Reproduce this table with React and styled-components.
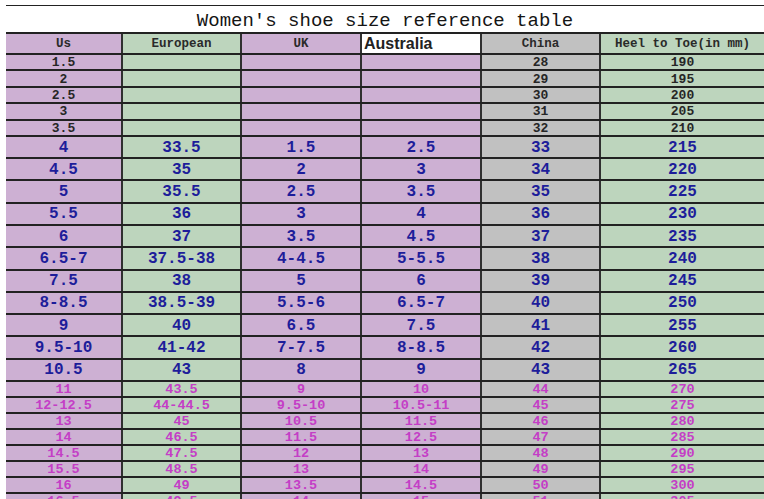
import React from "react";
import styled, { createGlobalStyle } from "styled-components";

const Global = createGlobalStyle`
  html, body { margin: 0; padding: 0; overflow: hidden; background: #fff; }
  body { font-family: "Liberation Mono", "DejaVu Sans Mono", monospace; }
`;

const COLS = "117px 119px 120px 120px 119px 1fr";
const PURPLE = "#cdb0d3";
const GREEN = "#bdd5bd";
const GRAY = "#c1c1c1";
const WHITE = "#ffffff";
const LINE = "#222222";

const Sheet = styled.div`
  margin: 5px 0 0 6px;
  border-top: 1px solid ${LINE};
  width: 758px;
`;

const Title = styled.div`
  display: flex;
  align-items: center;
  justify-content: center;
  font-family: "Liberation Mono", monospace;
  font-size: 19px;
  color: #151515;
  border-bottom: 2px solid ${LINE};
  padding-top: 4px;
  box-sizing: border-box;
  height: 28px;
`;

const Row = styled.div`
  display: grid;
  grid-template-columns: ${COLS};
  height: ${(p) => p.$h}px;
  box-sizing: border-box;
  border-bottom: ${(p) => p.$line || 2}px solid ${LINE};
`;

const Cell = styled.div`
  background: ${(p) => p.$bg};
  border-right: 2px solid #303030;
  display: flex;
  align-items: center;
  justify-content: ${(p) => (p.$left ? "flex-start" : "center")};
  padding-left: ${(p) => (p.$left ? "2px" : "0")};
  padding-top: 1px;
  font-family: ${(p) =>
    p.$sans ? '"Liberation Sans", Arial, sans-serif' : '"Liberation Mono", monospace'};
  font-weight: bold;
  font-size: ${(p) => p.$size}px;
  color: ${(p) => p.$color};
  white-space: pre;
  overflow: hidden;
  line-height: 1;
  &:last-child { border-right: none; }
`;

const BG = [PURPLE, GREEN, PURPLE, PURPLE, GRAY, GREEN];
const HEADER_BG = [PURPLE, GREEN, PURPLE, WHITE, GRAY, GREEN];

const header = ["Us", "European", "UK", "Australia", "China", "Heel to Toe(in mm)"];

const small = [
  ["1.5", "", "", "", "28", "190"],
  ["2", "", "", "", "29", "195"],
  ["2.5", "", "", "", "30", "200"],
  ["3", "", "", "", "31", "205"],
  ["3.5", "", "", "", "32", "210"],
];

const blue = [
  ["4", "33.5", "1.5", "2.5", "33", "215"],
  ["4.5", "35", "2", "3", "34", "220"],
  ["5", "35.5", "2.5", "3.5", "35", "225"],
  ["5.5", "36", "3", "4", "36", "230"],
  ["6", "37", "3.5", "4.5", "37", "235"],
  ["6.5-7", "37.5-38", "4-4.5", "5-5.5", "38", "240"],
  ["7.5", "38", "5", "6", "39", "245"],
  ["8-8.5", "38.5-39", "5.5-6", "6.5-7", "40", "250"],
  ["9", "40", "6.5", "7.5", "41", "255"],
  ["9.5-10", "41-42", "7-7.5", "8-8.5", "42", "260"],
  ["10.5", "43", "8", "9", "43", "265"],
];

const pink = [
  ["11", "43.5", "9", "10", "44", "270"],
  ["12-12.5", "44-44.5", "9.5-10", "10.5-11", "45", "275"],
  ["13", "45", "10.5", "11.5", "46", "280"],
  ["14", "46.5", "11.5", "12.5", "47", "285"],
  ["14.5", "47.5", "12", "13", "48", "290"],
  ["15.5", "48.5", "13", "14", "49", "295"],
  ["16", "49", "13.5", "14.5", "50", "300"],
  ["16.5", "49.5", "14", "15", "51", "305"],
];

function DataRow({ cells, h, size, color, line }) {
  return (
    <Row $h={h} $line={line}>
      {cells.map((c, i) => (
        <Cell key={i} $bg={BG[i]} $size={size} $color={color}>
          {c}
        </Cell>
      ))}
    </Row>
  );
}

export default function App() {
  return (
    <>
      <Global />
      <Sheet>
        <Title>Women's shoe size reference table</Title>
        <Row $h={21} $line={2}>
          {header.map((c, i) =>
            i === 3 ? (
              <Cell key={i} $bg={WHITE} $size={16} $color="#222" $sans $left>
                {c}
              </Cell>
            ) : (
              <Cell key={i} $bg={HEADER_BG[i]} $size={12.5} $color="#2a2a2a">
                {c}
              </Cell>
            )
          )}
        </Row>
        {small.map((r, i) => (
          <DataRow key={"s" + i} cells={r} h={16.4} size={13} color="#262626" />
        ))}
        {blue.map((r, i) => (
          <DataRow key={"b" + i} cells={r} h={22.27} size={16} color="#1d1d9a" />
        ))}
        {pink.map((r, i) => (
          <DataRow key={"p" + i} cells={r} h={16} size={13.5} color="#c43ec6" />
        ))}
      </Sheet>
    </>
  );
}
